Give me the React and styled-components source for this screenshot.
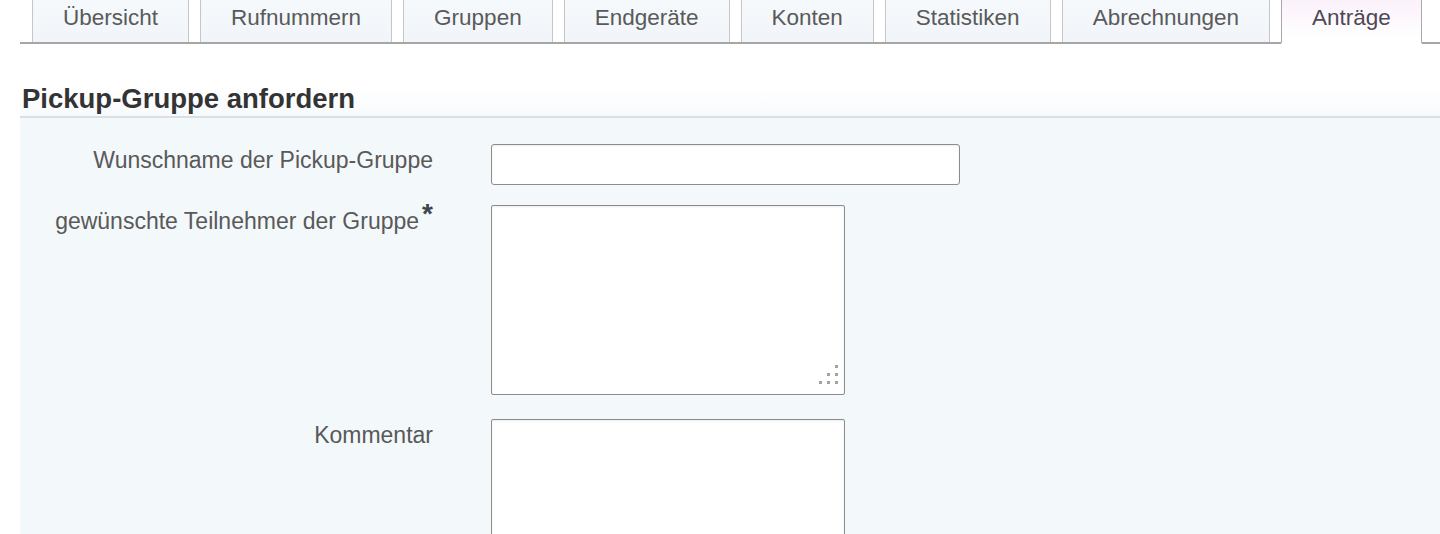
import React from 'react';
import styled, { createGlobalStyle } from 'styled-components';

const GlobalStyle = createGlobalStyle`
  html, body {
    margin: 0;
    padding: 0;
    background: #ffffff;
    font-family: "Liberation Sans", Arial, sans-serif;
    overflow: hidden;
  }
`;

const tabs = [
  'Übersicht',
  'Rufnummern',
  'Gruppen',
  'Endgeräte',
  'Konten',
  'Statistiken',
  'Abrechnungen',
  'Anträge',
];

// grip dots of the textarea resize corner: [column, row]
const gripDots = [
  [3, 1],
  [2, 2],
  [3, 2],
  [1, 3],
  [2, 3],
  [3, 3],
];

const App = () => {
  return (
    <>
      <GlobalStyle />
      <Page>
        <TabBar>
          {tabs.map((t) => (
            <Tab key={t} $active={t === 'Anträge'}>
              {t}
            </Tab>
          ))}
        </TabBar>

        <HeadingArea>
          <Heading>Pickup-Gruppe anfordern</Heading>
        </HeadingArea>

        <Panel>
          <Row $spacing={20}>
            <Label>Wunschname der Pickup-Gruppe</Label>
            <TextInput type="text" />
          </Row>
          <Row $spacing={24}>
            <Label>
              gewünschte Teilnehmer der Gruppe<Required>*</Required>
            </Label>
            <AreaWrap>
              <TextArea />
              <Grip>
                {gripDots.map(([c, r]) => (
                  <Dot key={`${c}-${r}`} $col={c} $row={r} />
                ))}
              </Grip>
            </AreaWrap>
          </Row>
          <Row $spacing={0}>
            <Label>Kommentar</Label>
            <AreaWrap>
              <TextArea />
            </AreaWrap>
          </Row>
        </Panel>
      </Page>
    </>
  );
};

export default App;

const Page = styled.div`
  margin-left: 20px;
  min-height: 534px;
  display: flex;
  flex-direction: column;
`;

const TabBar = styled.div`
  flex-shrink: 0;
  display: flex;
  gap: 11px;
  height: 42px;
  padding-left: 12px;
  border-bottom: 2px solid #a6a6a6;
`;

const Tab = styled.div`
  display: flex;
  align-items: center;
  padding: 0 30px 6px;
  border-left: 1px solid ${(p) => (p.$active ? '#a9a9a9' : '#c6c6c6')};
  border-right: 1px solid ${(p) => (p.$active ? '#a9a9a9' : '#c6c6c6')};
  background: ${(p) =>
    p.$active
      ? 'linear-gradient(#fbf1fb, #ffffff 90%)'
      : 'linear-gradient(#f6f9fc, #f1f5f9)'};
  color: ${(p) => (p.$active ? '#4d4955' : '#5a5a5a')};
  font-size: 22.5px;
  white-space: nowrap;
  margin-bottom: ${(p) => (p.$active ? '-2px' : '0')};
  border-bottom: ${(p) => (p.$active ? '2px solid #ffffff' : 'none')};
`;

const HeadingArea = styled.div`
  flex-shrink: 0;
  padding: 39px 0 0 2px;
  border-bottom: 2px solid #dadfe3;
  background: linear-gradient(#ffffff 60%, #f7fafc);
`;

const Heading = styled.h2`
  margin: 0 0 1px;
  font-size: 27.5px;
  line-height: 32px;
  font-weight: bold;
  color: #333333;
`;

const Panel = styled.div`
  flex: 1;
  background: #f3f8fb;
  padding-top: 26px;
`;

const Row = styled.div`
  display: grid;
  grid-template-columns: 413px 1fr;
  column-gap: 58px;
  align-items: start;
  margin-bottom: ${(p) => p.$spacing}px;
`;

const Label = styled.div`
  text-align: right;
  padding-top: 3px;
  font-size: 23px;
  line-height: 26px;
  color: #595959;
  white-space: nowrap;
`;

const Required = styled.span`
  display: inline-block;
  margin-left: 3px;
  font-size: 28px;
  font-weight: bold;
  color: #3b4650;
  vertical-align: 6px;
  line-height: 10px;
`;

const TextInput = styled.input`
  box-sizing: border-box;
  width: 469px;
  height: 41px;
  margin: 0;
  border: 1.5px solid #8c8c8c;
  border-radius: 3px;
  background: #ffffff;
  box-shadow: inset 0 1px 2px rgba(0, 0, 0, 0.08);
  font: 22.5px "Liberation Sans", Arial, sans-serif;
  padding: 0 8px;
  outline: none;
`;

const AreaWrap = styled.div`
  position: relative;
  width: 354px;
  height: 190px;
`;

const TextArea = styled.textarea`
  display: block;
  box-sizing: border-box;
  width: 100%;
  height: 100%;
  margin: 0;
  border: 1.5px solid #8c8c8c;
  border-radius: 2px;
  background: #ffffff;
  box-shadow: inset 0 1px 2px rgba(0, 0, 0, 0.08);
  resize: none;
  outline: none;
  font: 22.5px "Liberation Sans", Arial, sans-serif;
`;

const Grip = styled.div`
  position: absolute;
  right: 7px;
  bottom: 11px;
  display: grid;
  grid-template-columns: repeat(3, 3px);
  grid-template-rows: repeat(3, 3px);
  gap: 5px;
  pointer-events: none;
`;

const Dot = styled.span`
  grid-column: ${(p) => p.$col};
  grid-row: ${(p) => p.$row};
  background: #a3a3a3;
`;
